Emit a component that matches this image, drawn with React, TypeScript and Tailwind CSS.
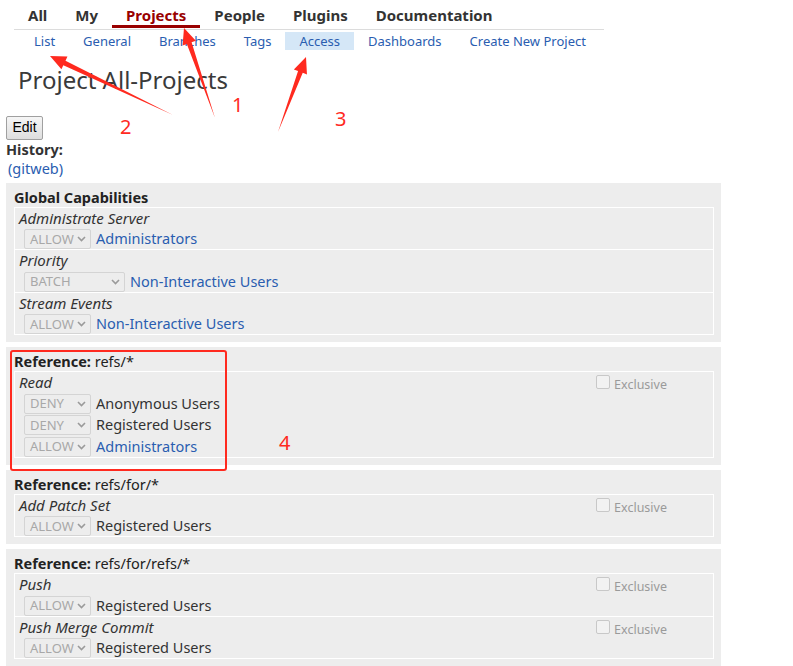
import React from 'react';

const topNav = ['All', 'My', 'Projects', 'People', 'Plugins', 'Documentation'];
const subNav = ['List', 'General', 'Branches', 'Tags', 'Access', 'Dashboards', 'Create New Project'];

type Rule = { action: string; group: string; link?: boolean; wide?: boolean };
type Perm = { name: string; exclusive?: boolean; rules: Rule[] };
type Section = { title: string; ref?: boolean; perms: Perm[] };

const sections: Section[] = [
    {
        title: 'Global Capabilities',
        perms: [
            { name: 'Administrate Server', rules: [{ action: 'ALLOW', group: 'Administrators', link: true }] },
            { name: 'Priority', rules: [{ action: 'BATCH', group: 'Non-Interactive Users', link: true, wide: true }] },
            { name: 'Stream Events', rules: [{ action: 'ALLOW', group: 'Non-Interactive Users', link: true }] },
        ],
    },
    {
        title: 'refs/*',
        ref: true,
        perms: [
            {
                name: 'Read',
                exclusive: true,
                rules: [
                    { action: 'DENY', group: 'Anonymous Users' },
                    { action: 'DENY', group: 'Registered Users' },
                    { action: 'ALLOW', group: 'Administrators', link: true },
                ],
            },
        ],
    },
    {
        title: 'refs/for/*',
        ref: true,
        perms: [{ name: 'Add Patch Set', exclusive: true, rules: [{ action: 'ALLOW', group: 'Registered Users' }] }],
    },
    {
        title: 'refs/for/refs/*',
        ref: true,
        perms: [
            { name: 'Push', exclusive: true, rules: [{ action: 'ALLOW', group: 'Registered Users' }] },
            { name: 'Push Merge Commit', exclusive: true, rules: [{ action: 'ALLOW', group: 'Registered Users' }] },
        ],
    },
];

function Select({ value, wide }: { value: string; wide?: boolean }) {
    return (
        <div
            className={`flex h-[20px] items-center justify-between rounded-[2px] border border-[#d4d4d4] bg-[#ededed] pl-[5px] pr-[4px] text-[13px] text-[#a8a8a8] ${
                wide ? 'w-[101px]' : 'w-[67px]'
            }`}
        >
            <span>{value}</span>
            <svg width="9" height="6" viewBox="0 0 9 6" fill="none">
                <path d="M1 1l3.5 3.5L8 1" stroke="#9a9a9a" strokeWidth="1.6" />
            </svg>
        </div>
    );
}

function Arrow({ x1, y1, x2, y2 }: { x1: number; y1: number; x2: number; y2: number }) {
    const len = Math.hypot(x2 - x1, y2 - y1);
    const dx = (x2 - x1) / len;
    const dy = (y2 - y1) / len;
    const nx = -dy;
    const ny = dx;
    const bx = x2 - dx * 16;
    const by = y2 - dy * 16;
    const pts = [
        [x1, y1],
        [bx + nx * 2.5, by + ny * 2.5],
        [bx + nx * 7, by + ny * 7],
        [x2, y2],
        [bx - nx * 7, by - ny * 7],
        [bx - nx * 2.5, by - ny * 2.5],
    ]
        .map((p) => p.join(','))
        .join(' ');
    return <polygon points={pts} fill="#ff2a1f" />;
}

export default function App() {
    return (
        <div className="relative min-h-[666px] w-[793px] bg-white font-['Noto_Sans','Open_Sans',sans-serif] text-[#333]">
            {/* top menu */}
            <div className="ml-[14px] w-[590px] border-b border-[#dcdcdc]">
                <div className="flex h-[29px] items-end">
                    {topNav.map((n) =>
                        n === 'Projects' ? (
                            <div key={n} className="mb-[1px] border-b-[3px] border-[#990000] px-[14px] text-[15px] font-bold leading-[19px] text-[#990000]">
                                {n}
                            </div>
                        ) : (
                            <div key={n} className="px-[14px] pb-[5px] text-[15px] font-bold leading-[18px]">
                                {n}
                            </div>
                        ),
                    )}
                </div>
            </div>
            <div className="ml-[20px] mt-[2px] flex h-[18px]">
                {subNav.map((n) => (
                    <div
                        key={n}
                        className={`px-[14px] text-[13px] leading-[18px] text-[#2a5db0] ${n === 'Access' ? 'bg-[#d5e7f7]' : ''}`}
                    >
                        {n}
                    </div>
                ))}
            </div>

            <h1 className="ml-[18px] mt-[15px] text-[24px] leading-[30px] text-[#3a3a3a]">Project All-Projects</h1>

            <div className="ml-[6px] mt-[19px]">
                <button className="h-[24px] w-[37px] rounded-[2px] border border-[#a0a0a0] bg-gradient-to-b from-[#f6f6f6] to-[#dedede] font-['Liberation_Sans',sans-serif] text-[14px] text-black">
                    Edit
                </button>
                <div className="text-[14.5px] font-bold leading-[19px]">History:</div>
                <div className="ml-[2px] text-[14.5px] leading-[18px] text-[#2a5db0]">(gitweb)</div>
            </div>

            <div className="mt-[6px] flex flex-col gap-[5px] pl-[6px]">
                {sections.map((s) => (
                    <div key={s.title} className="w-[715px] bg-[#ededed] px-[8px] pb-[7px] pt-[4px]">
                        <div className="text-[14.5px] leading-[20px] text-[#222]">
                            {s.ref ? (
                                <>
                                    <span className="font-bold">Reference:</span> {s.title}
                                </>
                            ) : (
                                <span className="font-bold">{s.title}</span>
                            )}
                        </div>
                        <div className="mr-[-1px] border border-white">
                            {s.perms.map((p, i) => (
                                <div key={p.name} className={`pl-[4px] ${i > 0 ? 'border-t border-white' : ''}`}>
                                    <div className="flex h-[20px] items-start justify-between">
                                        <span className="text-[15px] italic leading-[20px]">{p.name}</span>
                                        {p.exclusive && (
                                            <label className="mr-[46px] mt-[3px] flex h-[14px] items-start gap-[4px] text-[12.5px] leading-[18px] text-[#9a9a9a]">
                                                <span className="h-[14px] w-[14px] shrink-0 rounded-[2px] border border-[#c8c8c8] bg-[#f2f2f2]" />
                                                <span className="mt-[1px]">Exclusive</span>
                                            </label>
                                        )}
                                    </div>
                                    {p.rules.map((r, j) => (
                                        <div key={j} className="flex h-[21.5px] items-center gap-[5px] pl-[5px] pt-[2px]">
                                            <Select value={r.action} wide={r.wide} />
                                            <span className={`text-[14.5px] ${r.link ? 'text-[#2a5db0]' : 'text-[#333]'}`}>{r.group}</span>
                                        </div>
                                    ))}
                                </div>
                            ))}
                        </div>
                    </div>
                ))}
            </div>

            {/* annotations */}
            <svg className="pointer-events-none absolute left-0 top-0" width="793" height="666">
                <Arrow x1={215} y1={118} x2={184} y2={28} />
                <Arrow x1={173} y1={115} x2={50} y2={56} />
                <Arrow x1={278} y1={132} x2={306} y2={57} />
            </svg>
            <span className="absolute left-[232px] top-[92px] text-[20px] leading-[26px] text-[#ff2a1f]">1</span>
            <span className="absolute left-[120px] top-[114px] text-[20px] leading-[26px] text-[#ff2a1f]">2</span>
            <span className="absolute left-[335px] top-[106px] text-[20px] leading-[26px] text-[#ff2a1f]">3</span>
            <span className="absolute left-[279px] top-[430px] text-[20px] leading-[26px] text-[#ff2a1f]">4</span>
            <div className="absolute left-[10px] top-[350px] h-[121px] w-[217px] rounded-[3px] border-2 border-[#ff2a1f]" />
        </div>
    );
}
